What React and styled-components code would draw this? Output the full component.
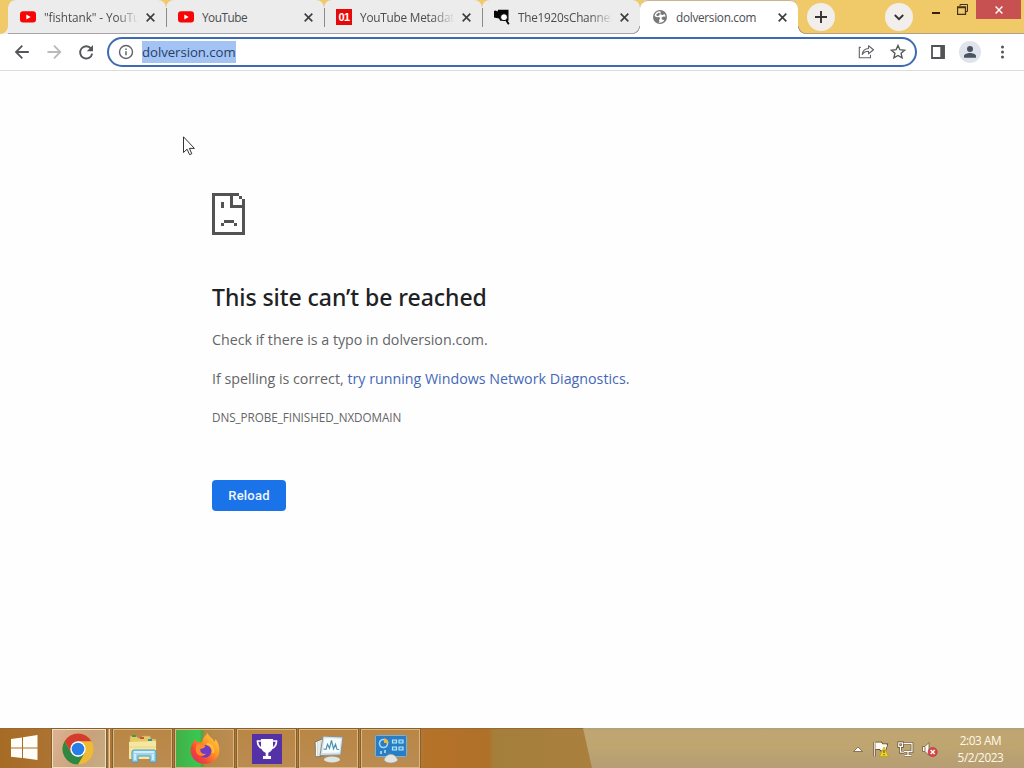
import React from 'react';
import styled, { createGlobalStyle, css } from 'styled-components';

const Global = createGlobalStyle`
  * { box-sizing: border-box; }
  body { margin: 0; background: #fff; overflow: hidden; font-family: "Open Sans", "Noto Sans", sans-serif; }
  svg { display: block; flex: none; }
`;

const Screen = styled.div`
  position: relative;
  width: 1024px;
  height: 768px;
  display: flex;
  flex-direction: column;
  background: #fefefe;
  overflow: hidden;
`;

/* ---------- tab strip ---------- */

const TabStrip = styled.header`
  height: 34px;
  flex: none;
  display: flex;
  align-items: flex-start;
  padding-left: 8px;
  background: #f0c968;
  box-shadow: inset 0 -1px #b5a184;
`;

const TabBox = styled.div`
  width: 158px;
  height: 34px;
  flex: none;
  display: flex;
  align-items: center;
  padding: 0 8px 0 12px;
  border-radius: 8px 8px 0 0;
  background: ${(p) => (p.$active ? '#fff' : '#ececec')};
  ${(p) =>
    p.$active
      ? css`
          position: relative;
          box-shadow: inset 0 1px #c9b48b;
          &::before, &::after {
            content: '';
            position: absolute;
            bottom: 0;
            width: 8px;
            height: 8px;
          }
          &::before { left: -8px; background: radial-gradient(circle at 0 0, #ececec 6.7px, #aaa4a4 7.2px, #aaa4a4 7.8px, #fff 8.3px); }
          &::after { right: -8px; background: radial-gradient(circle at 100% 0, #f0c968 6.7px, #b5a184 7.2px, #b5a184 7.8px, #fff 8.3px); }
        `
      : css`box-shadow: inset 0 -1px #aaa3a8;`}
`;

const FirstTabFoot = styled.div`
  position: absolute;
  left: 0;
  top: 26px;
  width: 8px;
  height: 8px;
  background: radial-gradient(circle at 0 0, #f0c968 7.5px, #ececec 8.3px);
`;

const TabTitle = styled.span`
  width: 93px;
  margin-left: 8px;
  overflow: hidden;
  white-space: nowrap;
  font-size: 11.8px;
  line-height: 20px;
  color: #4b4c50;
  letter-spacing: ${(p) => p.$track || 0}px;
  ${(p) => p.$fade && css`mask-image: linear-gradient(90deg, #000 72px, transparent 95px);`}
`;

const TabClose = styled.span`
  width: 15px;
  margin-left: 6px;
  display: flex;
  justify-content: center;
`;

const TabDivider = styled.i`
  width: 1px;
  height: 19px;
  margin: 0 -1px 0 auto;
  flex: none;
  background: #8d8a88;
  transform: translateX(8px);
`;

const RoundButton = styled.span`
  width: 28px;
  height: 28px;
  flex: none;
  margin: 3px 0 0 ${(p) => p.$left}px;
  border-radius: 50%;
  display: flex;
  align-items: center;
  justify-content: center;
  background: #f1eeeb;
`;

const WindowButtons = styled.div`
  display: flex;
  margin-left: 18px;
`;

const CaptionButton = styled.span`
  width: ${(p) => p.$w}px;
  height: 19px;
  display: flex;
  align-items: center;
  justify-content: center;
  padding-left: ${(p) => p.$inset || 0}px;
  background: ${(p) => (p.$danger ? '#c75050' : 'transparent')};
`;

/* ---------- toolbar ---------- */

const Toolbar = styled.nav`
  height: 37px;
  flex: none;
  display: flex;
  align-items: center;
  padding: 0 12px 1px;
  background: #fff;
  border-bottom: 1px solid #dddddb;
`;

const NavIcons = styled.div`
  display: flex;
  gap: 12px;
  width: 95px;
`;

const AddressBar = styled.div`
  width: 810px;
  height: 30px;
  display: flex;
  align-items: center;
  padding: 0 8px 0 9px;
  border: 2px solid #3b6cb3;
  border-radius: 15px;
`;

const SelectedUrl = styled.span`
  margin-left: 8px;
  height: 22px;
  line-height: 23px;
  font-size: 13.2px;
  letter-spacing: -0.05px;
  width: 94px;
  white-space: nowrap;
  color: #263f66;
  background: #a3c3f5;
`;

const AddressActions = styled.div`
  display: flex;
  gap: 14px;
  margin-left: auto;
`;

const ToolbarEnd = styled.div`
  display: flex;
  align-items: center;
  margin-left: 14px;
`;

const Avatar = styled.span`
  width: 22px;
  height: 22px;
  margin: 0 14px 0 13px;
  border-radius: 50%;
  background: #dee3ec;
`;

/* ---------- error page ---------- */

const Page = styled.main`
  flex: 1;
  display: flex;
  flex-direction: column;
  align-items: flex-start;
  padding: 122px 0 0 212px;
  color: #646567;
`;

const Heading = styled.h1`
  margin: 45px 0 0;
  font-family: "Noto Sans", "Open Sans", sans-serif;
  font-size: 23px;
  line-height: 34px;
  font-weight: 500;
  letter-spacing: -0.05px;
  color: #202124;
  white-space: nowrap;
`;

const Paragraph = styled.p`
  margin: ${(p) => p.$top}px 0 0;
  font-size: 14.25px;
  line-height: 24px;
  white-space: nowrap;
`;

const Link = styled.a`
  color: #4468b8;
`;

const ErrorCode = styled.div`
  margin-top: 16px;
  font-size: 11.7px;
  line-height: 20px;
  letter-spacing: -0.06px;
`;

const ReloadButton = styled.button`
  margin-top: 53px;
  width: 74px;
  height: 31px;
  padding: 0;
  border: 0;
  border-radius: 4px;
  background: #1a73e8;
  color: #f1f6ff;
  font: 500 13px/31px Roboto, sans-serif;
  letter-spacing: 0.2px;
`;

const Cursor = styled.svg`
  position: absolute;
  left: 183px;
  top: 136px;
`;

/* ---------- taskbar ---------- */

const Taskbar = styled.footer`
  position: relative;
  height: 40px;
  flex: none;
  display: flex;
  background: linear-gradient(90deg, #a66b24 0, #ad7434 60px, #b17a36 420px, #b57229 425px, #b07028 488px, #a47e3b 494px, #ab803e 600px);
  box-shadow: inset 0 1px #956a35;
  &::before {
    content: '';
    position: absolute;
    inset: 0 0 0 583px;
    clip-path: polygon(0 0, 100% 0, 100% 100%, 9px 100%);
    background: linear-gradient(#ada17c 0, #bea573 2px, #bfa670 40%, #b69d74);
  }
`;

const StartButton = styled.div`
  width: 52px;
  display: flex;
  align-items: center;
  padding-left: 11px;
`;

const TaskButton = styled.div`
  width: ${(p) => (p.$stack ? 54 : 59)}px;
  height: 39px;
  margin: 1px ${(p) => (p.$stack ? 7 : 3)}px 0 0;
  flex: none;
  display: flex;
  align-items: center;
  justify-content: center;
  border: 1px solid ${(p) => (p.$stack ? '#f0dec0' : '#dab77f')};
  outline: 1px solid #86602f;
  outline-offset: 0;
  background: ${(p) => p.$fill || 'linear-gradient(#b98644, #bb8b52)'};
  ${(p) => p.$stack && css`box-shadow: 2px 0 #92703c, 3px 0 #c29b69, 4px 0 #e7cfaa;`}
  ${(p) => p.$stack && css`padding-right: 2px;`}
`;

const Tray = styled.div`
  position: relative;
  margin-left: auto;
  display: flex;
  align-items: center;
  padding-top: 2px;
`;

const TrayIcons = styled.div`
  display: flex;
  align-items: center;
  gap: 7px;
`;

const TrayArrow = styled.svg`
  margin-right: 2px;
`;

const Clock = styled.div`
  width: 86px;
  padding-right: 1px;
  text-align: center;
  font-size: 11.8px;
  line-height: 17px;
  letter-spacing: -0.4px;
  color: #fff8ea;
`;

/* ---------- icons ---------- */

const CloseGlyph = ({ size = 9, color = '#3b3c40', weight = 1.4 }) => (
  <svg width={size} height={size} viewBox="0 0 8 8">
    <path d="M.6.6l6.8 6.8M7.4.6L.6 7.4" stroke={color} strokeWidth={weight} />
  </svg>
);

const YouTubeIcon = () => (
  <svg width="16" height="16" viewBox="0 0 16 16">
    <rect y="2.2" width="16" height="11.4" rx="3" fill="#f80606" />
    <path d="M6.3 5.4v5l4.4-2.5z" fill="#fff" />
  </svg>
);

const NumberBox = styled.span`
  width: 16px;
  height: 16px;
  flex: none;
  background: #e60909;
  color: #fff;
  font: 700 11px/16px "Liberation Sans", sans-serif;
  letter-spacing: -0.5px;
  text-align: center;
`;

const CameraIcon = () => (
  <svg width="16" height="16" viewBox="0 0 16 16">
    <path d="M0 2l1.5-.6L3.6 2.6 4 .8h10.5v11H6.2L5 9.6 0 8.6z" fill="#050505" />
    <circle cx="10" cy="8.2" r="3.5" fill="#fff" stroke="#050505" strokeWidth="1" />
    <path d="M12.2 11.2l2.6 4" stroke="#050505" strokeWidth="1.8" />
  </svg>
);

const GlobeIcon = () => (
  <svg width="14" height="14" viewBox="0 0 14 14">
    <circle cx="7" cy="7" r="7" fill="#77787a" />
    <path d="M7.6 1.4C4.6 1 2 3 1.5 6l2.2 1.2 2.6-.2.7 1.6-1 1.3.5 1.5-1 1.1c2.4.6 4.7-.4 5.9-2.2L9 9.5l-.6-1.8 2-1.2 2.1.2c-.1-1-.4-2-1-2.8L9.7 5 7.4 4.4z" fill="#fff" />
    <path d="M3.2 4.4L5.8 2.5 7 3.8 6.2 5.4 4 6.2z" fill="#77787a" />
  </svg>
);

const BackArrow = ({ color = '#55565a', flip }) => (
  <svg width="20" height="20" viewBox="0 0 20 20" fill="none" stroke={color} strokeWidth="1.8">
    <path d={flip ? 'M3.5 10h12M10 3.7l6.3 6.3-6.3 6.3' : 'M16.8 10h-12M10.3 3.7L4 10l6.3 6.3'} />
  </svg>
);

const ReloadIcon = () => (
  <svg width="20" height="20" viewBox="0 0 20 20">
    <path d="M15.1 6.7A6.1 6.1 0 1 0 16.2 11.6" fill="none" stroke="#55565a" strokeWidth="1.9" />
    <path d="M17 3v6.2h-6.2z" fill="#55565a" />
  </svg>
);

const InfoIcon = () => (
  <svg width="16" height="16" viewBox="0 0 16 16" fill="none" stroke="#5f6368">
    <circle cx="8" cy="8" r="6.5" strokeWidth="1.4" />
    <path d="M8 7.2v4M8 4.4V6" strokeWidth="1.5" />
  </svg>
);

const ShareIcon = () => (
  <svg width="17" height="16" viewBox="0 0 17 16" fill="none" stroke="#606368" strokeWidth="1.1">
    <path d="M2.8 4.4H1.3v10.3h11.2v-2.9" />
    <path d="M4.3 11.5c.4-3.9 2.4-5.9 6.2-6V2.8l5 3.9-5 4.1V8.3c-2.6 0-4.7.9-6.2 3.2z" strokeLinejoin="round" />
  </svg>
);

const StarIcon = () => (
  <svg width="18" height="18" viewBox="0 0 18 18">
    <path d="M9 2.5l1.9 4.2 4.7.5-3.5 3.1 1 4.6L9 12.5l-4.1 2.4 1-4.6-3.5-3.1 4.7-.5z" fill="none" stroke="#55575b" strokeWidth="1.4" />
  </svg>
);

const PanelIcon = () => (
  <svg width="15" height="14" viewBox="0 0 15 14">
    <path d="M1 1h12v12H1z" fill="none" stroke="#525357" strokeWidth="1.8" />
    <path d="M9.3 1h4.2v12H9.3z" fill="#525357" />
  </svg>
);

const SadPage = () => (
  <svg width="33" height="42" viewBox="0 0 33 42" fill="#535353" shapeRendering="crispEdges">
    <path d="M0 0h27v3H3v36h27V15H18V3h3v9h9V6h3v36H0zM27 3h3v3h-3zM9 9h3v6H9zM12 27h10v3H12zM9 30h3v3H9zM22 30h3v3h-3z" />
  </svg>
);

const WindowsLogo = () => (
  <svg width="27" height="26" viewBox="0 0 27 26" fill="#fffdf7">
    <path d="M0 4l11-1.5V12.4H0zM12 2.3L26.5 0v12.4H12zM0 13.4h11v9.7L0 21.7zM12 13.4h14.5V25L12 23z" />
  </svg>
);

const ChromeLogo = () => (
  <svg width="32" height="32" viewBox="0 0 32 32">
    <circle cx="16" cy="16" r="15.5" fill="#efbb34" />
    <path d="M2.6 8.2A15.5 15.5 0 0 1 29.4 8.2H16L9.3 20z" fill="#d43c2d" />
    <path d="M2.6 8.2L9.3 20 16 23.8l6.7-3.9L16 31.5A15.5 15.5 0 0 1 2.6 8.2z" fill="#2e8743" />
    <circle cx="16" cy="16" r="7.7" fill="#fff" />
    <circle cx="16" cy="16" r="6.3" fill="#287de6" />
  </svg>
);

const ExplorerIcon = () => (
  <svg width="32" height="30" viewBox="0 0 32 30">
    <path d="M3 5V2h6l2 2h4V2h8l1 3h5v19H2z" fill="#e6c966" stroke="#bda35b" strokeWidth=".6" />
    <path d="M5 1h4v2H5z" fill="#3c9b50" />
    <path d="M13 3h4v2h-4z" fill="#c85538" />
    <path d="M21 5h4v2h-4z" fill="#2c96ac" />
    <path d="M2 8l27-1v18H2z" fill="#f5e7a0" />
    <path d="M2 13h27" stroke="#e8d587" />
    <path d="M5 28V18q0-2 2-2h20q2 0 2 2v10h-6v-6H11v6z" fill="#9ed3ea" stroke="#479fc3" />
    <path d="M7 18h20M8 20v6M26 20v6" stroke="#dff5ff" strokeWidth="1.5" />
  </svg>
);

const FirefoxLogo = () => (
  <svg width="32" height="32" viewBox="0 0 32 32">
    <defs>
      <linearGradient id="fx" x1="1" y1="0" x2="0" y2="1">
        <stop offset="0" stopColor="#ffe04b" />
        <stop offset=".4" stopColor="#ff9626" />
        <stop offset=".72" stopColor="#f34339" />
        <stop offset="1" stopColor="#d92770" />
      </linearGradient>
    </defs>
    <path d="M18.7 0c1 4 5.2 5.2 7 9l.8-3C31 12 32 20 27.4 25.7 23 31.2 13 33 6.5 27.7.7 23 .2 14.7 4.2 9.4L6 6l2 3 5 .3c1-5 3-6 5.7-9.3z" fill="url(#fx)" />
    <circle cx="16" cy="18.3" r="6.3" fill="#713bc5" />
    <path d="M8 11l6.5 1.1c2.3.3 2 2.2.3 2.8l-3.4 1.2c-.8 3.7 2.6 5.6 6 4.5-2 3-6.2 3.1-8.5 1C6.4 19.4 6 14.5 8 11z" fill="#ff8a29" />
    <path d="M18 11c4 0 7.6 4.5 6 9" fill="none" stroke="#ffc43c" strokeWidth="2" />
  </svg>
);

const TrophyIcon = () => (
  <svg width="30" height="30" viewBox="0 0 30 30">
    <path d="M0 0h30v30H0z" fill="#5531a7" />
    <path d="M9 5h12v7c0 4-3 6.2-4.7 6.7V22H19v3h-8v-3h2.7v-3.3C12 18.2 9 16 9 12z" fill="#fff" />
    <path d="M9 7H5.5c0 4 1.5 6.5 5 7.3M21 7h3.5c0 4-1.5 6.5-5 7.3" fill="none" stroke="#fff" strokeWidth="1.7" />
  </svg>
);

const MonitorIcon = () => (
  <svg width="30" height="28" viewBox="0 0 30 28">
    <ellipse cx="18" cy="24.5" rx="8" ry="3" fill="#dde4e4" />
    <path d="M1 7l9-4v18l-8 1z" fill="#d6d9d5" stroke="#777b73" />
    <path d="M2.5 7v14M5 6v15M7.5 5v15" stroke="#f5f7f2" strokeWidth="1.2" />
    <path d="M9 1l20 1-2.2 18L6 20.5z" fill="#d9dfdf" stroke="#878f91" />
    <path d="M10.5 3l16.5.8-1.7 13.6L8.2 18z" fill="#f4fcfc" />
    <path d="M9.5 14l2.5.3 1.5-5 2 4 2-8 2 8.5 2-4.5 1.5 5 2 .2" fill="none" stroke="#4f8fb0" strokeWidth="1.2" />
  </svg>
);

const ControlPanelIcon = () => (
  <svg width="32" height="28" viewBox="0 0 32 28">
    <rect x=".5" y=".5" width="31" height="21" rx="1" fill="#287dc4" stroke="#75b3dc" />
    <circle cx="8.5" cy="8.5" r="4" fill="none" stroke="#a5dbf2" strokeWidth="1.6" />
    <path d="M9 8V3.3A4.7 4.7 0 0 1 13.6 8z" fill="#f4b53d" />
    <path d="M17.5 5h4v3h-4zM24 5h4v3h-4zM17.5 12h4v3h-4zM24 12h4v3h-4z" fill="#3b91d2" stroke="#b5e8f7" strokeWidth="1.2" />
    <path d="M6 16v3M10 15v3" stroke="#b8dcea" strokeWidth="1.6" />
    <path d="M9 25q1-4 4-5c3-2 7 0 8 2l2 3c-3 4-12 4-14 0z" fill="#e1e4df" stroke="#929e9e" strokeWidth=".6" />
  </svg>
);

const FlagIcon = () => (
  <svg width="17" height="17" viewBox="0 0 17 17">
    <path d="M1.7 1v14.5M2.5 2h5.8l1.2 1.8h4.2L12 9H8L7 7.5H2.5" fill="#fffaf0" stroke="#5a4632" strokeWidth="2.4" />
    <path d="M1.7 1v14.5M2.5 2h5.8l1.2 1.8h4.2L12 9H8L7 7.5H2.5" fill="#fffaf0" stroke="#fffaf0" strokeWidth="1" />
    <path d="M11 6l4.5 9.5h-9z" fill="#ecd52a" stroke="#b8930e" strokeWidth=".6" />
    <path d="M11 9v3M11 13v1.3" stroke="#5b5320" strokeWidth="1.1" />
  </svg>
);

const NetworkIcon = () => (
  <svg width="17" height="17" viewBox="0 0 17 17" fill="none">
    <path d="M6.5 2.5h8.5v8H7M11 10.5V14M7.5 14.5h7M3.5 5.5v5.7H7M1.8 1.8h3.6v3.6H1.8z" stroke="#59462f" strokeWidth="2.6" />
    <path d="M6.5 2.5h8.5v8H7M11 10.5V14M7.5 14.5h7M3.5 5.5v5.7H7M1.8 1.8h3.6v3.6H1.8z" stroke="#fffaf0" strokeWidth="1.3" />
  </svg>
);

const SpeakerIcon = () => (
  <svg width="17" height="17" viewBox="0 0 17 17">
    <path d="M1.5 5.5H4l4-4v13l-4-4H1.5z" fill="#fffaf0" stroke="#6d5842" strokeWidth=".8" />
    <path d="M4 6v4.5" stroke="#8f7961" />
    <circle cx="11.7" cy="11" r="4.6" fill="#d4474a" stroke="#ad282e" strokeWidth=".5" />
    <path d="M9.7 9l4 4m0-4l-4 4" stroke="#fff" strokeWidth="1.4" />
  </svg>
);

/* ---------- composition ---------- */

function Tab({ icon, title, fade, active, divider, track }) {
  return (
    <TabBox $active={active}>
      {icon}
      <TabTitle $fade={fade} $track={track}>{title}</TabTitle>
      <TabClose><CloseGlyph /></TabClose>
      {divider && <TabDivider />}
    </TabBox>
  );
}

const GlobeSlot = styled.span`
  width: 16px;
  flex: none;
  display: flex;
  justify-content: center;
`;

export default function App() {
  return (
    <>
      <Global />
      <Screen>
        <TabStrip>
          <FirstTabFoot />
          <Tab icon={<YouTubeIcon />} title={'"fishtank" - YouTube'} fade divider track={-0.1} />
          <Tab icon={<YouTubeIcon />} title="YouTube" divider track={-0.5} />
          <Tab icon={<NumberBox>01</NumberBox>} title="YouTube Metadata" fade divider track={-0.22} />
          <Tab icon={<CameraIcon />} title="The1920sChannel" fade track={-0.25} />
          <Tab icon={<GlobeSlot><GlobeIcon /></GlobeSlot>} title="dolversion.com" active track={-0.3} />
          <RoundButton $left={9}>
            <svg width="12" height="12" viewBox="0 0 12 12"><path d="M6 0v12M0 6h12" stroke="#34332f" strokeWidth="1.9" /></svg>
          </RoundButton>
          <RoundButton $left={50}>
            <svg width="10" height="7" viewBox="0 0 10 7"><path d="M.8 1L5 5.2 9.2 1" fill="none" stroke="#34332f" strokeWidth="1.9" /></svg>
          </RoundButton>
          <WindowButtons>
            <CaptionButton $w={10}>
              <svg width="8" height="8" viewBox="0 0 8 8"><path d="M0 6h8v2H0z" fill="#3d1f10" /></svg>
            </CaptionButton>
            <CaptionButton $w={35} $inset={7}>
              <svg width="11" height="11" viewBox="0 0 11 11" fill="none" stroke="#443018"><path d="M3 2V.5h7.5v7H9" /><path d="M.5 3h8v7.5h-8zM.5 3.5h8" strokeWidth="1.3" /></svg>
            </CaptionButton>
            <CaptionButton $w={45} $danger><CloseGlyph size={8} color="#fff" /></CaptionButton>
          </WindowButtons>
        </TabStrip>

        <Toolbar>
          <NavIcons><BackArrow /><BackArrow flip color="#b9babc" /><ReloadIcon /></NavIcons>
          <AddressBar>
            <InfoIcon />
            <SelectedUrl>dolversion.com</SelectedUrl>
            <AddressActions><ShareIcon /><StarIcon /></AddressActions>
          </AddressBar>
          <ToolbarEnd>
            <PanelIcon />
            <Avatar>
              <svg width="22" height="22" viewBox="0 0 22 22" fill="#4b5260"><circle cx="11" cy="8" r="3" /><path d="M5 16.7v-1.6c0-2 3.5-3 6-3s6 1 6 3v1.6z" /></svg>
            </Avatar>
            <svg width="15" height="16" viewBox="0 0 15 16" fill="#505257"><circle cx="7.5" cy="3" r="1.5" /><circle cx="7.5" cy="8" r="1.5" /><circle cx="7.5" cy="13" r="1.5" /></svg>
          </ToolbarEnd>
        </Toolbar>

        <Page>
          <SadPage />
          <Heading>This site can’t be reached</Heading>
          <Paragraph $top={14}>Check if there is a typo in dolversion.com.</Paragraph>
          <Paragraph $top={15}>If spelling is correct, <Link>try running Windows Network Diagnostics</Link>.</Paragraph>
          <ErrorCode>DNS_PROBE_FINISHED_NXDOMAIN</ErrorCode>
          <ReloadButton>Reload</ReloadButton>
        </Page>

        <Taskbar>
          <StartButton><WindowsLogo /></StartButton>
          <TaskButton $stack $fill="linear-gradient(115deg, #ddb294, #c8a27a 60%, #c8ad84)"><ChromeLogo /></TaskButton>
          <TaskButton><ExplorerIcon /></TaskButton>
          <TaskButton $fill="linear-gradient(90deg, #45ae46 0, #35ca51 23px, #55a345 26px, #b18948 29px, #bd8b51 100%)"><FirefoxLogo /></TaskButton>
          <TaskButton><TrophyIcon /></TaskButton>
          <TaskButton><MonitorIcon /></TaskButton>
          <TaskButton><ControlPanelIcon /></TaskButton>
          <Tray>
            <TrayIcons>
              <TrayArrow width="12" height="8" viewBox="0 0 12 8"><path d="M1.5 6.5L6 2l4.5 4.5z" fill="#fffaf0" stroke="#735e49" strokeWidth=".8" /></TrayArrow>
              <FlagIcon /><NetworkIcon /><SpeakerIcon />
            </TrayIcons>
            <Clock>2:03 AM<br />5/2/2023</Clock>
          </Tray>
        </Taskbar>

        <Cursor width="13" height="20" viewBox="0 0 13 20">
          <path d="M.5.8v15.7l3.6-3.3 2.5 5.5 2.2-1-2.4-5.3h5z" fill="#fff" stroke="#1c1c1c" strokeWidth=".9" />
        </Cursor>
      </Screen>
    </>
  );
}
